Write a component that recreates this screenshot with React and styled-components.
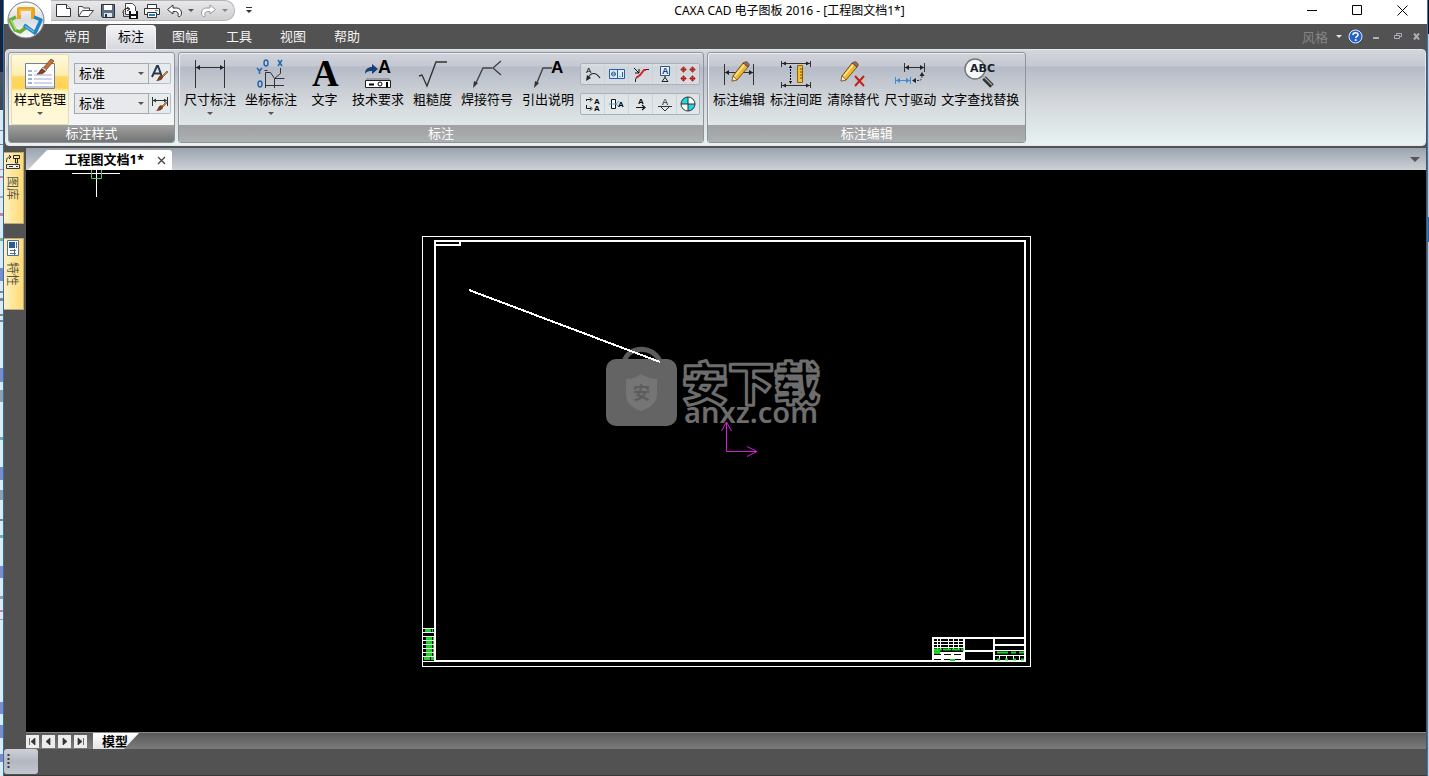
import React, { useState } from 'react';
import styled, { createGlobalStyle, css } from 'styled-components';

const GlobalStyle = createGlobalStyle`
  * {
    box-sizing: border-box;
  }

  body {
    margin: 0;
    font-family: 'Noto Sans CJK SC', 'Noto Sans', sans-serif;
    font-size: 13px;
    background: #525252;
  }

  button, select {
    font-family: inherit;
    font-size: inherit;
  }

  svg {
    display: block;
  }
`;

const Desktop = styled.div`
  display: flex;
  min-height: 100vh;
`;

const LeftEdge = styled.div`
  flex: 0 0 4px;
  border-right: 1px solid #2f6fae;
  background: linear-gradient(#16243f 0, #16243f 72px, #4b5563 72px, #3d4450 110px, #dbeaf5 110px, #dbeaf5 100%);
  overflow: hidden;
`;

const RightEdge = styled.div`
  flex: 0 0 2px;
  border-left: 1px solid #3d76ad;
  background: linear-gradient(#03112e 0, #03112e 34px, #a9cdea 34px, #a9cdea 217px, #0a68bd 217px, #0a68bd 242px, #b4d2ec 242px);
`;

const AppWindow = styled.div`
  flex: 1;
  min-width: 0;
  display: flex;
  flex-direction: column;
  position: relative;
  background: #525252;
`;

const TitleBar = styled.header`
  height: 24px;
  display: flex;
  align-items: flex-start;
  background: #fff;
`;

const Orb = styled.button`
  position: absolute;
  left: 3px;
  top: 1px;
  padding: 0;
  border: none;
  background: none;
  z-index: 2;
`;

const QuickAccess = styled.div`
  width: 184px;
  height: 21px;
  margin-left: 47px;
  padding-left: 2px;
  display: flex;
  align-items: center;
  border: 1px solid #b4b4b8;
  border-left: none;
  border-radius: 0 10px 10px 0;
  background: linear-gradient(#e8e8ea, #cfcfd2);
`;

const QuickButton = styled.button`
  width: ${({ $narrow }) => ($narrow ? '12px' : '22px')};
  height: 20px;
  padding: 0;
  border: none;
  background: none;
  display: flex;
  align-items: center;
  justify-content: center;
`;

const MoreButton = styled(QuickButton)`
  width: 28px;
`;

const WindowTitle = styled.h1`
  flex: 1;
  margin: 0;
  padding-left: 26px;
  font-family: 'Noto Sans', 'Noto Sans CJK SC', sans-serif;
  font-size: 12px;
  font-weight: 400;
  line-height: 22px;
  text-align: center;
  color: #000;
`;

const WindowButtons = styled.div`
  display: flex;
  padding-right: 2px;
`;

const WindowButton = styled.button`
  width: 45px;
  height: 21px;
  padding: 0;
  border: none;
  background: none;
  display: flex;
  align-items: center;
  justify-content: center;
`;

const MenuBar = styled.nav`
  height: 25px;
  display: flex;
  align-items: flex-end;
  padding-left: 48px;
  gap: 4px;
`;

const MenuTab = styled.button`
  width: 50px;
  height: 24px;
  padding: 0 0 3px;
  border: 1px solid transparent;
  border-bottom: none;
  border-radius: 4px 4px 0 0;
  background: none;
  color: #f4f4f4;
  line-height: 20px;

  ${({ $active }) =>
    $active &&
    css`
      color: #000;
      border-color: #f5f5f8;
      background: linear-gradient(#f3f4f7, #d5d8df);
    `}
`;

const MenuRight = styled.div`
  height: 24px;
  margin-left: auto;
  padding: 0 1px 2px 0;
  display: flex;
  align-items: center;
`;

const StyleButton = styled.button`
  padding: 0;
  border: none;
  background: none;
  color: #858585;
  display: flex;
  align-items: center;
  gap: 8px;
  margin-right: 6px;
`;

const MdiButton = styled.button`
  width: ${({ $wide }) => ($wide ? '25px' : '19px')};
  height: 22px;
  padding: 0;
  border: none;
  background: none;
  display: flex;
  align-items: center;
  justify-content: center;
`;

const Ribbon = styled.section`
  margin: 0 1px;
  height: 97px;
  padding: 2px;
  display: flex;
  gap: 3px;
  border: 1px solid #e6e7eb;
  border-radius: 4px;
  background: linear-gradient(#d4d6dd 0, #c5c8d1 16px, #b5bbc7 17px, #d2d6da 50px, #e6f1f0 92px);
`;

const Group = styled.div`
  display: flex;
  flex-direction: column;
  height: 91px;
  border: 1px solid #8f949c;
  border-radius: 3px;
  box-shadow: inset 1px 1px 0 #eef0f4;
  overflow: hidden;
  background: ${({ $light }) => ($light ? 'linear-gradient(#e9eaee, #f5f7f8)' : 'none')};
`;

const GroupBody = styled.div`
  flex: 1;
  display: flex;
  gap: 1px;
  padding: ${({ $pad }) => $pad || '1px 2px 0'};
`;

const GroupCaption = styled.div`
  height: 17px;
  line-height: 16px;
  text-align: center;
  color: #fff;
  background: ${({ $dark }) =>
    $dark ? 'linear-gradient(#a0a2a2, #737575)' : 'linear-gradient(#9fa1a2, #adb0b0)'};
`;

const LargeButton = styled.button`
  min-width: 45px;
  height: 71px;
  padding: 4px ${({ $tight }) => ($tight ? '2px' : '4px')} 0;
  border: none;
  border-radius: 2px;
  background: none;
  color: #000;
  display: flex;
  flex-direction: column;
  align-items: center;
  line-height: 18px;
  white-space: nowrap;

  ${({ $active }) =>
    $active &&
    css`
      width: 58px;
      border: 1px solid #e8dba6;
      padding: 3px 1px 0;
      background: linear-gradient(#fffae0 0, #fdeeb0 20px, #fdd766 22px, #ffd451 33px, #fff4c4 36px, #fff9dd 100%);
    `}
`;

const LargeIcon = styled.span`
  height: 32px;
  display: flex;
  align-items: center;
`;

const ArrowSlot = styled.span`
  height: 10px;
  display: flex;
  align-items: center;
`;

const StyleRows = styled.div`
  display: flex;
  flex-direction: column;
  gap: 9px;
  padding: 9px 0 0 4px;
`;

const StyleRow = styled.div`
  display: flex;
  height: 21px;
`;

const SelectWrap = styled.label`
  position: relative;
  display: block;
  width: 75px;
`;

const SelectArrow = styled.span`
  position: absolute;
  right: 5px;
  top: 9px;
  pointer-events: none;
`;

const Select = styled.select`
  width: 100%;
  height: 21px;
  padding: 0 4px 2px;
  appearance: none;
  border: 1px solid #a5a8ad;
  border-radius: 0;
  background: #e8e9eb;
  color: #000;
  line-height: 17px;
`;

const BrushButton = styled.button`
  width: 22px;
  height: 21px;
  padding: 0;
  border: 1px solid #b5c1c8;
  border-left: none;
  border-radius: 0 2px 2px 0;
  background: #e6ecee;
  display: flex;
  align-items: center;
  justify-content: center;
`;

const SmallRows = styled.div`
  display: flex;
  flex-direction: column;
  gap: 8px;
  padding: 9px 1px 0 1px;
`;

const SmallRow = styled.div`
  display: flex;
  height: 22px;
  border: 1px solid #a9b2ba;
  border-radius: 2px;
  background: rgba(240, 246, 247, 0.45);
`;

const SmallButton = styled.button`
  width: 24px;
  padding: 0;
  border: none;
  border-right: 1px solid #ccd2d7;
  background: none;
  display: flex;
  align-items: center;
  justify-content: center;

  &:last-child {
    border-right: none;
    width: 22px;
  }
`;

const Workspace = styled.main`
  flex: 1;
  display: flex;
  margin-top: 2px;
`;

const Dock = styled.aside`
  width: 22px;
  padding: 4px 2px 0 0;
  display: flex;
  flex-direction: column;
  gap: 14px;
`;

const DockTab = styled.button`
  height: 72px;
  padding: 1px 1px 0 0;
  border: 1px solid #b9ab7c;
  border-left: none;
  background: linear-gradient(90deg, #fdf1c4, #ffda72);
  color: #5c5840;
  display: flex;
  flex-direction: column;
  align-items: center;
  gap: 6px;
  font-size: 12px;
`;

const SidewaysText = styled.span`
  writing-mode: vertical-rl;
  text-orientation: sideways;
  line-height: 14px;
`;

const DocumentPane = styled.div`
  flex: 1;
  min-width: 0;
  display: flex;
  flex-direction: column;
  margin-right: 1px;
`;

const DocumentTabs = styled.div`
  height: 22px;
  display: flex;
  align-items: flex-end;
  justify-content: space-between;
  padding: 0 6px 0 2px;
  background: linear-gradient(#9aa3af, #ced1d6);
`;

const DocumentTab = styled.div`
  width: 144px;
  height: 20px;
  display: flex;
  align-items: center;
  justify-content: flex-end;
  gap: 13px;
  padding-right: 6px;
  border-radius: 0 3px 0 0;
  background: #fff;
  clip-path: polygon(19px 0, 100% 0, 100% 100%, 0 100%);
  font-family: 'Noto Sans', 'Noto Sans CJK SC', sans-serif;
  font-weight: 700;
  color: #000;
`;

const DocumentName = styled.span`
  line-height: 16px;
  padding-bottom: 3px;
`;

const PlainButton = styled.button`
  padding: 0;
  border: none;
  background: none;
`;

const TabListButton = styled(PlainButton)`
  align-self: center;
`;

const Canvas = styled.div`
  flex: 1;
  min-height: 400px;
  position: relative;
  overflow: hidden;
  background: #000;
`;

const Drawing = styled.svg`
  position: absolute;
  inset: 0;
  width: 100%;
  height: 100%;
`;

const Crosshair = styled.svg`
  position: absolute;
  left: 46px;
  top: 0;
`;

const ModelBar = styled.div`
  height: 17px;
  display: flex;
  align-items: flex-start;
  gap: 3px;
  border-top: 1px solid #888;
  background: linear-gradient(#5a5a5a, #7b7b7b);
`;

const PageButton = styled.button`
  width: 13px;
  height: 13px;
  margin-top: 2px;
  padding: 0;
  border: none;
  background: #ededed;
  display: flex;
  align-items: center;
  justify-content: center;
`;

const ModelTab = styled.button`
  width: 46px;
  height: 16px;
  margin-left: 3px;
  padding: 0 0 0 9px;
  border: none;
  background: linear-gradient(#fff, #e4e4e8);
  clip-path: polygon(0 0, 100% 0, 31px 100%, 0 100%);
  color: #000;
  font-weight: 700;
  line-height: 16px;
  text-align: left;
`;

const StatusBar = styled.footer`
  height: 27px;
  border-bottom: 1px solid #3a3a3a;
`;

const StatusGrip = styled.div`
  width: 34px;
  height: 25px;
  padding: 5px 3px;
  border-radius: 3px;
  background: linear-gradient(#cdd1d8, #b2b7c1 50%, #c3c7ce);
`;

const Caret = ({ color = '#555', size = 6 }) => (
  <svg width={size} height={size / 2} viewBox="0 0 6 3">
    <path d="M0 0h6L3 3z" fill={color} />
  </svg>
);

const OrbIcon = () => (
  <svg width="38" height="38" viewBox="0 0 38 38">
    <defs>
      <linearGradient id="orb" x1="0" y1="0" x2="0" y2="1">
        <stop offset="0" stopColor="#fff" />
        <stop offset="0.5" stopColor="#d9dce1" />
        <stop offset="1" stopColor="#fafbfc" />
      </linearGradient>
    </defs>
    <circle cx="19" cy="19" r="18" fill="url(#orb)" stroke="#777b80" />
    <g fill="none" strokeLinejoin="round">
      <path d="M12 18V8h14v10" stroke="#eda51d" strokeWidth="4" />
      <path d="M13 14V9h12" stroke="#f8cf6a" strokeWidth="1.200" />
      <path d="M9 16l-6 3 5 10 5 2 8-6" stroke="#68ae35" strokeWidth="3.500" />
      <path d="M4 19l5 10" stroke="#b4dd6e" strokeWidth="1.500" />
      <path d="M17 24l11 8 6-13-7-3" stroke="#1f83c4" strokeWidth="3.500" />
      <path d="M18 25l9 6" stroke="#72bfe5" strokeWidth="1.500" />
    </g>
  </svg>
);

const NewIcon = () => (
  <svg width="18" height="16" viewBox="0 0 18 16">
    <path d="M1.500 1.500h10l4 4v8h-14z" fill="#fff" stroke="#333" />
    <path d="M11.500 1.500v4h4" fill="#eee" stroke="#333" />
  </svg>
);

const OpenIcon = () => (
  <svg width="18" height="16" viewBox="0 0 18 16">
    <path d="M1.500 13.500v-10h4l1 1.500h6v3" fill="#f5f5f5" stroke="#444" />
    <path d="M1.500 13.500l4-6h11l-5 6z" fill="#fff" stroke="#444" />
  </svg>
);

const SaveIcon = () => (
  <svg width="16" height="16" viewBox="0 0 16 16">
    <path d="M1.500 1.500h13v13h-12l-1-1z" fill="#5b6f85" stroke="#28323e" />
    <path d="M4 2h8v5H4z" fill="#fff" />
    <path d="M4 10h8v4H4z" fill="#dfe6ee" />
    <path d="M5 11h2v3H5z" fill="#28323e" />
  </svg>
);

const SaveAllIcon = () => (
  <svg width="18" height="18" viewBox="0 0 18 18">
    <path d="M4.500 1.500h7l3 3v8h-10z" fill="#fff" stroke="#444" />
    <path d="M2 11a4 4 0 0 1 6-4M6 5l3 2-3 2" fill="none" stroke="#222" />
    <path d="M2.500 9.500v5h7" fill="none" stroke="#444" />
    <path d="M8 9h9v8H8z" fill="#111" />
    <path d="M10 9h5v3h-5zM10 14h5v2h-5z" fill="#fff" />
  </svg>
);

const PrintIcon = () => (
  <svg width="18" height="16" viewBox="0 0 18 16">
    <path d="M4.500 5V1.500h9V5" fill="#fff" stroke="#333" />
    <path d="M1.500 5.500h15v6h-15z" fill="#f3f4f5" stroke="#333" />
    <path d="M4.500 9.500h9v5h-9z" fill="#fff" stroke="#333" />
    <path d="M6 12h6" stroke="#287fbf" strokeWidth="2" />
    <path d="M12 7.500h3" stroke="#2c9cd0" />
  </svg>
);

const UndoIcon = ({ flip, color = '#333' }) => (
  <svg width="17" height="14" viewBox="0 0 17 14">
    <path
      transform={flip ? 'translate(17 0) scale(-1 1)' : undefined}
      d="M1.500 5.500L7 1v3h3.500c3 0 5 2 5 5 0 2-1 3.500-2.500 4-.5-.5-1-1-1-1.500 1-2-.5-4-2.500-4H7V10z"
      fill="#fff"
      stroke={color}
    />
  </svg>
);

const HelpIcon = () => (
  <svg width="15" height="15" viewBox="0 0 15 15">
    <circle cx="7.500" cy="7.500" r="6.500" fill="#2464c8" stroke="#d8ebff" />
    <path d="M5 6c0-3 5-3 5-.3 0 1.700-2.200 1.600-2.200 3.300" fill="none" stroke="#fff" strokeWidth="1.600" />
    <circle cx="7.700" cy="11" r="1" fill="#fff" />
  </svg>
);

const Brush = () => (
  <>
    <path d="M26 1l3 2-8 9-3-2z" fill="#c76f33" stroke="#6e3517" strokeWidth="0.700" />
    <path d="M18 9l4 3-2 2-4-3z" fill="#ccd0d4" stroke="#555" strokeWidth="0.500" />
    <path d="M17 11l3 2c-1 3-4 3-8 3 3-1 2-4 5-5z" fill="#8a421c" stroke="#4d210c" strokeWidth="0.600" />
  </>
);

const StyleManageIcon = () => (
  <svg width="32" height="32" viewBox="0 0 32 32">
    <path d="M1.500 5.500h29v25h-29z" fill="#fff" stroke="#7183a5" />
    <path d="M2 28h28v2H2z" fill="#bcc8df" />
    <path d="M4 13h4M4 17h4M4 21h4M4 25h4" stroke="#3f64b0" />
    <path d="M10 17h18M10 21h18M10 25h18M10 13h3" stroke="#9faccc" />
    <g transform="translate(1 0)">
      <Brush />
    </g>
  </svg>
);

const TextBrushIcon = () => (
  <svg width="18" height="17" viewBox="0 0 18 17">
    <path d="M1 12L6 1h1l4 11M3 8.500h6" fill="none" stroke="#2d3950" strokeWidth="2" />
    <path d="M16 6l1 1-5 5-1-1z" fill="#d98c36" stroke="#744014" strokeWidth="0.600" />
    <path d="M10 10l2 2c0 3-4 4-7 4 2-1 2-5 5-6z" fill="#7d3d1b" />
  </svg>
);

const DimBrushIcon = () => (
  <svg width="18" height="17" viewBox="0 0 18 17">
    <path d="M1.500 2v9M16.500 2v9M2 5.500h14" stroke="#333" fill="none" />
    <path d="M2 5.500l3-2v4zM16 5.500l-3-2v4z" fill="#333" />
    <path d="M15 7l1 1-4 4-1-1z" fill="#d98c36" stroke="#744014" strokeWidth="0.600" />
    <path d="M10 10l2 2c0 3-4 4-7 4 2-1 2-5 5-6z" fill="#7d3d1b" />
  </svg>
);

const DimensionIcon = () => (
  <svg width="32" height="32" viewBox="0 0 32 32">
    <path d="M1.500 2v28M30.500 2v28M2 9.500h28" stroke="#333" fill="none" />
    <path d="M2 9.500l4-2.500v5zM30 9.500l-4-2.500v5z" fill="#222" />
  </svg>
);

const OrdinateIcon = () => (
  <svg width="32" height="32" viewBox="0 0 32 32">
    <path d="M10.500 30V14.500h5l4 6h10M10 27.500h19M19.500 30V20.500l6-5V10M12.500 12.500h-3" fill="none" stroke="#333" />
    <g fill="none" stroke="#2467ad" strokeWidth="1.500">
      <ellipse cx="11" cy="5" rx="2" ry="3" />
      <path d="M23 2l4 6M27 2l-4 6M2 10l2.500 3L7 10M4.500 13v3" />
      <ellipse cx="5" cy="26" rx="2" ry="3" />
    </g>
  </svg>
);

// upright "A" used inside the drawing icons
const LetterA = ({ x, y, size, color = '#000', weight = 700, family = 'Liberation Sans, sans-serif' }) => (
  <text x={x} y={y} fill={color} fontSize={size} fontWeight={weight} fontFamily={family}>
    A
  </text>
);

const TextIcon = () => (
  <svg width="32" height="32" viewBox="0 0 32 32">
    <LetterA x={3} y={28} size={37} family="Liberation Serif, serif" />
  </svg>
);

const TechIcon = () => (
  <svg width="30" height="32" viewBox="0 0 30 32">
    <path d="M2 16c0-5 3-7 7-7V6l6 5-6 5v-3c-3 0-5 0-7 3z" fill="#173f7c" />
    <LetterA x={15} y={15} size={18} />
    <path d="M2.500 22.500h25v7h-25z" fill="#fff" stroke="#222" />
    <path d="M3 21h24" stroke="#777" />
    <path d="M6 26.500h5M24 24v5" stroke="#000" strokeWidth="2" />
    <circle cx="17" cy="26" r="2" fill="none" stroke="#000" />
  </svg>
);

const RoughnessIcon = () => (
  <svg width="32" height="32" viewBox="0 0 32 32">
    <path d="M2 18l3-1 5 11L19 4h11" fill="none" stroke="#333" strokeWidth="1.400" />
  </svg>
);

const WeldIcon = () => (
  <svg width="32" height="32" viewBox="0 0 32 32">
    <path d="M4 27l8-17h9M30 3l-8 7 8 7" fill="none" stroke="#444" strokeWidth="1.400" />
    <path d="M2 30l1-7 4 2z" fill="#333" />
  </svg>
);

const LeaderIcon = () => (
  <svg width="32" height="32" viewBox="0 0 32 32">
    <path d="M4 27l7-17h9" fill="none" stroke="#444" strokeWidth="1.400" />
    <path d="M2 30l1-7 4 2z" fill="#333" />
    <LetterA x={19} y={15} size={17} />
  </svg>
);

const Pencil = () => (
  <>
    <path d="M13 17L23 4l5 4-11 13-5 1z" fill="#f1b62c" stroke="#6b4612" strokeWidth="0.900" />
    <path d="M15 17L25 5" stroke="#ffe792" strokeWidth="1.500" />
    <path d="M23 4l2-1c2-1 5 2 4 4l-1 1z" fill="#8e7065" stroke="#51352c" strokeWidth="0.700" />
    <path d="M13 17l-1 5 5-1z" fill="#fff1cf" stroke="#6b4612" strokeWidth="0.600" />
  </>
);

const DimEditIcon = () => (
  <svg width="32" height="32" viewBox="0 0 32 32">
    <path d="M1.500 6v21M30.500 6v21M2 14.500h28" stroke="#333" fill="none" />
    <path d="M2 14.500l4-2.500v5zM30 14.500l-4-2.500v5z" fill="#222" />
    <g transform="translate(-3 1)">
      <Pencil />
    </g>
  </svg>
);

const DimSpaceIcon = () => (
  <svg width="32" height="32" viewBox="0 0 32 32">
    <path d="M1.500 3v6M30.500 3v6M2 5.500h28M1.500 24v6M30.500 24v6M2 27.500h28" stroke="#333" fill="none" />
    <path d="M2 5.500l4-2v4zM30 5.500l-4-2v4zM2 27.500l4-2v4zM30 27.500l-4-2v4z" fill="#222" />
    <path d="M10.500 8v17" stroke="#000" strokeDasharray="2 1" />
    <path d="M9 10l1.500-3 1.500 3zM9 23l1.500 3 1.500-3z" fill="#000" />
    <path d="M17.500 7.500h5v17h-5z" fill="#f4c12d" stroke="#8f6011" />
    <path d="M20 11h3M20 14h3M20 17h3M20 20h3" stroke="#714b0c" />
  </svg>
);

const ClearIcon = () => (
  <svg width="32" height="32" viewBox="0 0 32 32">
    <g transform="translate(-8 1)">
      <Pencil />
    </g>
    <path d="M18 18l9 10M27 18l-9 10" stroke="#c72018" strokeWidth="2" />
  </svg>
);

const DriveIcon = () => (
  <svg width="32" height="32" viewBox="0 0 32 32">
    <path d="M10.500 5v9M30.500 5v9M11 9.500h19" stroke="#333" fill="none" />
    <path d="M11 9.500l4-2.500v5zM30 9.500l-4-2.500v5z" fill="#222" />
    <path d="M1.500 19v7M16.500 19v7M2 22.500h14" stroke="#3e8dd0" fill="none" />
    <path d="M2 22.500l4-2.500v5zM16 22.500l-4-2.500v5z" fill="#3e8dd0" />
    <path d="M20 22.500h4c3 0 4-1 4-5" stroke="#333" fill="none" strokeDasharray="2 1" />
    <path d="M18 22.500l4-2.500v5zM28 14l-2.500 4h5z" fill="#222" />
  </svg>
);

const FindIcon = () => (
  <svg width="32" height="32" viewBox="0 0 32 32">
    <circle cx="11" cy="11" r="10" fill="#f4fafb" stroke="#777" strokeWidth="1.500" />
    <path d="M20 20l8 8" stroke="#333" strokeWidth="5" />
    <path d="M19 18l9 9" stroke="#aaa" strokeWidth="1.200" />
    <text x="6" y="14" fill="#17202a" fontSize="11" fontWeight="700" fontFamily="DejaVu Sans, sans-serif">
      ABC
    </text>
  </svg>
);

const smallIcons = {
  arc: (
    <>
      <LetterA x={1} y={7} size={8} weight={400} />
      <path d="M3 12c3-6 8-6 12 0" fill="none" stroke="#222" strokeWidth="1.200" />
      <path d="M1 15l1-6 4 3z" fill="#222" />
    </>
  ),
  tolerance: (
    <>
      <path d="M0.500 3.500h15v9h-15zM8.500 4v8" fill="#ddecfa" stroke="#2a5f9f" />
      <circle cx="4.500" cy="8" r="2" fill="none" stroke="#2a5f9f" />
      <path d="M2 8h5M11 11v-1M13.500 6v5" stroke="#2a5f9f" />
    </>
  ),
  chamfer: (
    <>
      <path d="M2.500 16v-3l2-2M11 3.500h5" fill="none" stroke="#222" />
      <path d="M3 12l4-3 4-5h2" fill="none" stroke="#d4222b" strokeWidth="2" />
      <path d="M1 2l5 5M6 3v4H2" fill="none" stroke="#111" />
    </>
  ),
  datum: (
    <>
      <path d="M3.500 0.500h9v9h-9z" fill="#e8f2fb" stroke="#2d578a" />
      <LetterA x={5} y={8} size={9} color="#173d72" />
      <path d="M8 10v2M5 15.500l3-4 3 4z" fill="none" stroke="#222" />
    </>
  ),
  holes: (
    <g fill="#ef9a91" stroke="#b1221b">
      {[[3.500, 3.500], [12.500, 3.500], [3.500, 12.500], [12.500, 12.500]].map(([x, y]) => (
        <g key={`${x}-${y}`}>
          <circle cx={x} cy={y} r="2" />
          <path d={`M${x - 3} ${y}h6M${x} ${y - 3}v6`} />
        </g>
      ))}
    </g>
  ),
  direction: (
    <>
      <LetterA x={9} y={8} size={8} />
      <LetterA x={9} y={15} size={8} />
      <path d="M1.500 5V3.500H6M5 1.500l2 2-2 2M1.500 9v3.500H6M5 10.500l2 2-2 2" fill="none" stroke="#111" />
    </>
  ),
  section: (
    <>
      <path d="M2.500 3.500h4v9h-4z" fill="#fff" stroke="#111" />
      <path d="M0 8h8M10 5L7 8l3 3" stroke="#4ba0d8" fill="none" />
      <LetterA x={9} y={11} size={8} />
    </>
  ),
  view: (
    <>
      <LetterA x={5} y={8} size={8} />
      <path d="M3 11.500h8M9 9l3 2.500-3 2.500" fill="none" stroke="#111" strokeWidth="1.200" />
    </>
  ),
  elevation: (
    <>
      <LetterA x={5} y={9} size={9} weight={400} />
      <path d="M1 10.500h14M4 11l4 4 4-4" fill="none" stroke="#333" />
    </>
  ),
  centroid: (
    <>
      <path d="M8 8V1a7 7 0 0 1 7 7zM8 8v7a7 7 0 0 1-7-7z" fill="#fff" />
      <path d="M8 8V1a7 7 0 0 0-7 7zM8 8v7a7 7 0 0 0 7-7z" fill="#21d6df" />
      <circle cx="8" cy="8" r="7" fill="none" stroke="#333" />
      <path d="M8 1v14M1 8h14" stroke="#333" />
    </>
  )
};

const SmallIcon = ({ name }) => (
  <svg width="16" height="16" viewBox="0 0 16 16">
    {smallIcons[name]}
  </svg>
);

const menuTabs = ['常用', '标注', '图幅', '工具', '视图', '帮助'];

const annotateTools = [
  { label: '尺寸标注', icon: <DimensionIcon />, menu: true },
  { label: '坐标标注', icon: <OrdinateIcon />, menu: true },
  { label: '文字', icon: <TextIcon /> },
  { label: '技术要求', icon: <TechIcon /> },
  { label: '粗糙度', icon: <RoughnessIcon /> },
  { label: '焊接符号', icon: <WeldIcon /> },
  { label: '引出说明', icon: <LeaderIcon /> }
];

const editTools = [
  { label: '标注编辑', icon: <DimEditIcon /> },
  { label: '标注间距', icon: <DimSpaceIcon /> },
  { label: '清除替代', icon: <ClearIcon /> },
  { label: '尺寸驱动', icon: <DriveIcon /> },
  { label: '文字查找替换', icon: <FindIcon /> }
];

const smallTools = [
  ['arc', 'tolerance', 'chamfer', 'datum', 'holes'],
  ['direction', 'section', 'view', 'elevation', 'centroid']
];

const pageIcons = [
  'M2.500 2v7M8 2v7L4 5.500z',
  'M7 2v7L3 5.500z',
  'M4 2v7l4-3.500z',
  'M8.500 2v7M3 2v7l4-3.500z'
];

const RibbonTool = ({ label, icon, menu, tight, active }) => (
  <LargeButton $tight={tight} $active={active}>
    <LargeIcon>{icon}</LargeIcon>
    {label}
    {menu && (
      <ArrowSlot>
        <Caret />
      </ArrowSlot>
    )}
  </LargeButton>
);

const StyleSelect = ({ id, icon, name }) => (
  <StyleRow>
    <SelectWrap htmlFor={id}>
      <Select id={id} aria-label={name}>
        <option>标准</option>
      </Select>
      <SelectArrow>
        <Caret size={6} />
      </SelectArrow>
    </SelectWrap>
    <BrushButton aria-label={name}>{icon}</BrushButton>
  </StyleRow>
);

const edgeMarks = [
  [130, 1, '#111'], [144, 1, '#111'], [169, 1, '#b3202a'], [176, 2, '#b3202a'], [196, 2, '#667'],
  [213, 3, '#b3202a'], [238, 3, '#0b7a35'], [268, 13, '#1a2fa0'], [291, 2, '#222'], [298, 3, '#222'],
  [314, 2, '#222'], [320, 2, '#222'], [368, 14, '#1a2fa0'], [390, 12, '#456'], [437, 3, '#0b7a35'],
  [467, 13, '#1a2fa0'], [490, 10, '#456'], [519, 2, '#222'], [535, 3, '#0b7a35'], [566, 12, '#1a2fa0'],
  [596, 3, '#555'], [610, 2, '#b3202a'], [619, 1, '#b3202a'], [702, 12, '#1a2fa0'], [725, 13, '#1a2fa0'],
  [754, 8, '#1a2fa0']
];

const DrawingSheet = () => (
  <Drawing viewBox="26 170 1400 562" preserveAspectRatio="xMidYMid meet">
    <g fill="none" stroke="#fff" shapeRendering="crispEdges">
      <path d="M422.500 236.500h608v430h-608z" />
      <path d="M435 241h590v420H435z" strokeWidth="2" />
      <path d="M435 245h25v-4" strokeWidth="2" />
      <path d="M423 628.500h12M423 632.500h12M423 636.500h12M423 640.500h12M423 644.500h12M423 648.500h12M423 652.500h12M423 656.500h12M423 661.500h12" />
      <path d="M933 661v-23h92M963.500 638v23M994 638v23M963 650.500h31M994 645h31" strokeWidth="2" />
      <path d="M933 641.500h30M933 644.500h30M933 647.500h30M937.500 638v12M940.500 638v12M948.500 638v12M953.500 638v12M958.500 638v12M994 650.500h31M994 655.500h31M999.500 655v6M1006.500 655v6M1013.500 655v6M1019.500 655v6" />
    </g>
    <path d="M934 652h29v8h-29z" fill="#fff" />
    <path d="M934 654.500h29M934 659.500h29" stroke="#000" strokeDasharray="7 3" />
    <g stroke="#18d425" fill="none">
      <path d="M934 649.500h30" strokeWidth="2" strokeDasharray="8 1" />
      <path d="M934 652h6" strokeWidth="4" />
      <path d="M950 660h5M997 652.500h11M1011 652.500h5M1019 652.500h5" strokeWidth="2" />
      <path d="M997 659.500h27" strokeWidth="2" strokeDasharray="3 5" />
      <path d="M425 630.500h8M426 638.500h8M426 642.500h8M426 646.500h8M426 650.500h8M426 654.500h8M424 658.500h10" strokeWidth="3" strokeDasharray="6 1" />
    </g>

    <text
      x="682"
      y="400"
      fill="#000"
      stroke="#6d6d6d"
      strokeWidth="3"
      strokeLinejoin="round"
      fontFamily="'Noto Sans CJK SC', sans-serif"
      fontSize="46"
      fontWeight="900"
    >
      安下载
    </text>
    <text x="684" y="423" fill="#6d6d6d" fontFamily="'Noto Sans', sans-serif" fontSize="29" fontWeight="600">
      anxz.com
    </text>
    <path d="M624 362c4-17 30-17 36 0" fill="none" stroke="#5c5c5c" strokeWidth="5" />
    <rect x="606" y="359" width="71" height="67" rx="10" fill="#646464" />
    <path d="M626 379c6 0 11-2 15-5 5 3 10 5 16 5v15c0 9-7 14-16 17-9-3-15-8-15-17z" fill="#757575" />
    <text x="633" y="399" fill="#5c5c5c" fontSize="17" fontWeight="700" fontFamily="'Noto Sans CJK SC', sans-serif">
      安
    </text>
    <path d="M469 290l191 72" stroke="#fff" strokeWidth="2" shapeRendering="crispEdges" />
    <path d="M726.500 422v29.500H757M721.500 431l5-9 5 9M747 446.500l10 5-10 5" fill="none" stroke="#d81fd8" />
  </Drawing>
);

const App = () => {
  const [activeTab, setActiveTab] = useState('标注');

  return (
    <Desktop>
      <GlobalStyle />
      <LeftEdge>
        <svg width="3" height="776">
          {edgeMarks.map(([y, height, color]) => (
            <rect key={y} x="0" y={y} width="3" height={height} fill={color} opacity="0.500" />
          ))}
        </svg>
      </LeftEdge>

      <AppWindow>
        <Orb aria-label="菜单">
          <OrbIcon />
        </Orb>
        <TitleBar>
          <QuickAccess>
            <QuickButton aria-label="新建"><NewIcon /></QuickButton>
            <QuickButton aria-label="打开"><OpenIcon /></QuickButton>
            <QuickButton aria-label="保存"><SaveIcon /></QuickButton>
            <QuickButton aria-label="另存为"><SaveAllIcon /></QuickButton>
            <QuickButton aria-label="打印"><PrintIcon /></QuickButton>
            <QuickButton aria-label="撤销"><UndoIcon /></QuickButton>
            <QuickButton $narrow aria-label="撤销列表"><Caret size={6} /></QuickButton>
            <QuickButton aria-label="重做"><UndoIcon flip color="#999" /></QuickButton>
            <QuickButton $narrow aria-label="重做列表"><Caret size={6} color="#888" /></QuickButton>
          </QuickAccess>
          <MoreButton aria-label="自定义">
            <svg width="6" height="6" viewBox="0 0 6 6">
              <path d="M0 0h6v1H0zM0 3h6L3 6z" fill="#333" />
            </svg>
          </MoreButton>
          <WindowTitle>CAXA CAD 电子图板 2016 - [工程图文档1*]</WindowTitle>
          <WindowButtons>
            <WindowButton aria-label="最小化">
              <svg width="11" height="11"><path d="M0 5.500h10" stroke="#000" /></svg>
            </WindowButton>
            <WindowButton aria-label="最大化">
              <svg width="11" height="11"><path d="M0.500 0.500h9v9h-9z" fill="none" stroke="#000" /></svg>
            </WindowButton>
            <WindowButton aria-label="关闭">
              <svg width="11" height="11"><path d="M0.500 0.500l10 10M10.500 0.500l-10 10" stroke="#000" /></svg>
            </WindowButton>
          </WindowButtons>
        </TitleBar>

        <MenuBar>
          {menuTabs.map((tab) => (
            <MenuTab key={tab} $active={tab === activeTab} onClick={() => setActiveTab(tab)}>
              {tab}
            </MenuTab>
          ))}
          <MenuRight>
            <StyleButton>
              风格
              <Caret color="#e6e6e6" />
            </StyleButton>
            <PlainButton aria-label="帮助"><HelpIcon /></PlainButton>
            <MdiButton $wide aria-label="最小化文档">
              <svg width="6" height="8"><path d="M0 6h6" stroke="#aaafb8" strokeWidth="2" /></svg>
            </MdiButton>
            <MdiButton aria-label="还原文档">
              <svg width="8" height="8">
                <path d="M2.500 3V1.500h5v3H6M0.500 3.500h5v3h-5z" fill="none" stroke="#aaafb8" />
              </svg>
            </MdiButton>
            <MdiButton aria-label="关闭文档">
              <svg width="8" height="7"><path d="M1 0.500l5 6M6 0.500l-5 6" stroke="#aaafb8" strokeWidth="2" /></svg>
            </MdiButton>
          </MenuRight>
        </MenuBar>

        <Ribbon>
          <Group $light>
            <GroupBody $pad="1px 3px 0 2px">
              <RibbonTool label="样式管理" icon={<StyleManageIcon />} menu active />
              <StyleRows>
                <StyleSelect id="text-style" name="文本样式" icon={<TextBrushIcon />} />
                <StyleSelect id="dim-style" name="尺寸样式" icon={<DimBrushIcon />} />
              </StyleRows>
            </GroupBody>
            <GroupCaption $dark>标注样式</GroupCaption>
          </Group>

          <Group>
            <GroupBody $pad="1px 2px 0 1px">
              {annotateTools.map((tool) => (
                <RibbonTool key={tool.label} {...tool} />
              ))}
              <SmallRows>
                {smallTools.map((row) => (
                  <SmallRow key={row[0]}>
                    {row.map((name) => (
                      <SmallButton key={name} aria-label={name}>
                        <SmallIcon name={name} />
                      </SmallButton>
                    ))}
                  </SmallRow>
                ))}
              </SmallRows>
            </GroupBody>
            <GroupCaption>标注</GroupCaption>
          </Group>

          <Group>
            <GroupBody $pad="1px 4px 0 3px">
              {editTools.map((tool) => (
                <RibbonTool key={tool.label} {...tool} tight />
              ))}
            </GroupBody>
            <GroupCaption>标注编辑</GroupCaption>
          </Group>
        </Ribbon>

        <Workspace>
          <Dock>
            <DockTab>
              <svg width="16" height="16" viewBox="0 0 16 16">
                <path d="M1.500 8c0-4 1-5 4-5M4 1l2 2-2 2M8.500 1.500h6v3h-6zM10.500 5v4h2V5" fill="none" stroke="#222" />
                <path d="M1.500 10.500h13v4h-13z" fill="#eee" stroke="#333" />
                <path d="M4 12.500h4M11 12.500h2" stroke="#333" />
              </svg>
              <SidewaysText>图库</SidewaysText>
            </DockTab>
            <DockTab>
              <svg width="12" height="16" viewBox="0 0 12 16">
                <path d="M0.500 0.500h11v15H0.500z" fill="#f7f9fc" stroke="#4d6f98" />
                <path d="M2 2h6v6H2z" fill="#275c98" />
                <path d="M3 10.500h6M3 13.500h6M7.500 9v6M9.500 2v6" stroke="#5a6b7c" />
              </svg>
              <SidewaysText>特性</SidewaysText>
            </DockTab>
          </Dock>

          <DocumentPane>
            <DocumentTabs>
              <DocumentTab>
                <DocumentName>工程图文档1*</DocumentName>
                <PlainButton aria-label="关闭">
                  <svg width="9" height="9"><path d="M1 1l7 7M8 1l-7 7" stroke="#444" strokeWidth="1.300" /></svg>
                </PlainButton>
              </DocumentTab>
              <TabListButton aria-label="文档列表">
                <Caret size={10} />
              </TabListButton>
            </DocumentTabs>
            <Canvas>
              <DrawingSheet />
              <Crosshair width="48" height="28">
                <path d="M0 3.500h48M24.500 0v27" stroke="#fff" />
                <path d="M19.500 0v8.500h10V0" fill="none" stroke="#4fc878" />
              </Crosshair>
            </Canvas>
            <ModelBar>
              {pageIcons.map((d) => (
                <PageButton key={d} aria-label="翻页">
                  <svg width="11" height="11"><path d={d} fill="#333" stroke="#333" strokeWidth="0.700" /></svg>
                </PageButton>
              ))}
              <ModelTab>模型</ModelTab>
            </ModelBar>
          </DocumentPane>
        </Workspace>

        <StatusBar>
          <StatusGrip>
            <svg width="3" height="16">
              <path d="M1.500 0v16" stroke="#3a3a3a" strokeWidth="2" strokeDasharray="2 2" />
            </svg>
          </StatusGrip>
        </StatusBar>
      </AppWindow>
      <RightEdge />
    </Desktop>
  );
};

export default App;
